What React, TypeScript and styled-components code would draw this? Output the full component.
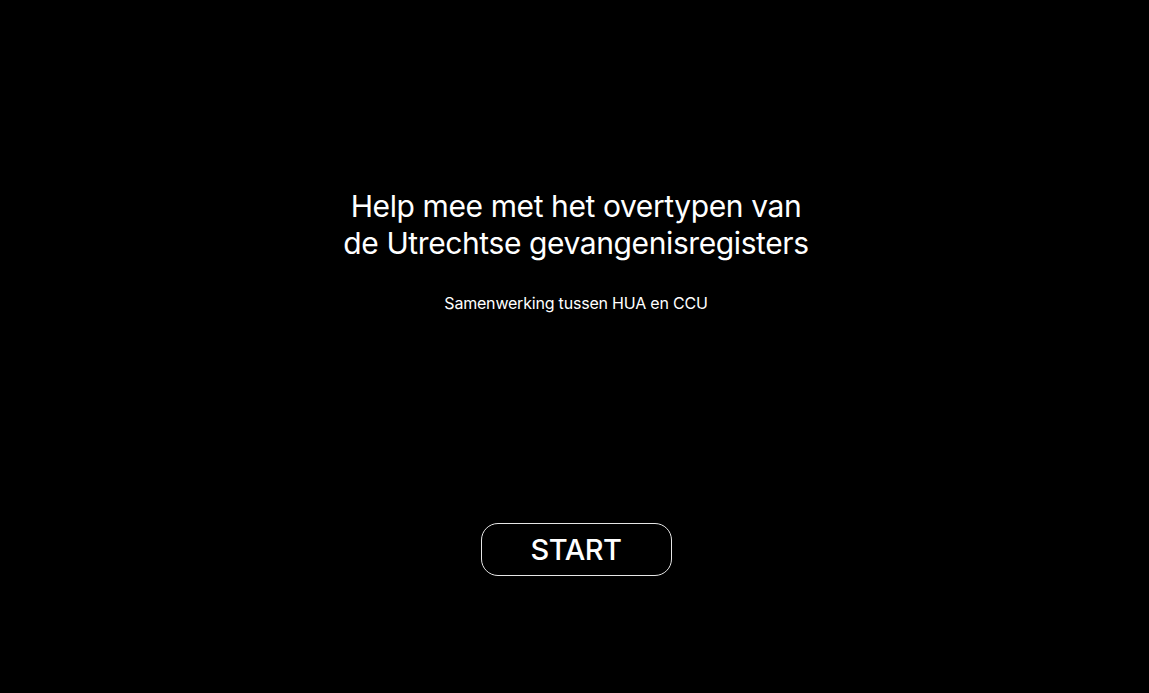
import React from "react";
import styled, { createGlobalStyle } from "styled-components";

const Global = createGlobalStyle`
  html, body { margin: 0; padding: 0; background: #000; }
  body { font-family: Inter, "Liberation Sans", sans-serif; color: #fff; }
`;

const Page = styled.main`
  height: 693px;
  display: flex;
  flex-direction: column;
  align-items: center;
  padding: 188px 0 0 3px;
  box-sizing: border-box;
`;

const Title = styled.h1`
  margin: 0;
  font-size: 30px;
  font-weight: 400;
  line-height: 37px;
  text-align: center;
  letter-spacing: -0.4px;
`;

const Subtitle = styled.p`
  margin: 31px 0 0;
  font-size: 16px;
  line-height: 20px;
  letter-spacing: -0.2px;
`;

const StartButton = styled.button`
  margin-top: 210px;
  width: 191px;
  height: 53px;
  border: 1.5px solid #e6e6e6;
  border-radius: 17px;
  background: transparent;
  color: #fff;
  font-family: inherit;
  font-size: 29px;
  font-weight: 500;
  letter-spacing: -0.5px;
  cursor: pointer;
`;

export default function App() {
  return (
    <>
      <Global />
      <Page>
        <Title>
          Help mee met het overtypen van
          <br />
          de Utrechtse gevangenisregisters
        </Title>
        <Subtitle>Samenwerking tussen HUA en CCU</Subtitle>
        <StartButton>START</StartButton>
      </Page>
    </>
  );
}
